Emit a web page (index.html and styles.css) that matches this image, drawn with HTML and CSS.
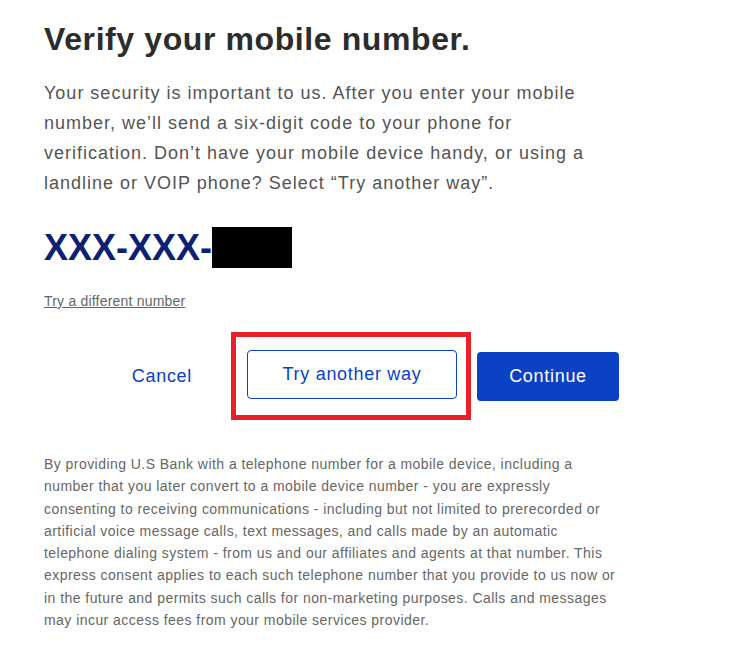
FILE: index.html
```html
<!DOCTYPE html>
<html lang="en">
<head>
    <meta charset="UTF-8">
    <meta name="viewport" content="width=device-width, initial-scale=1.0">
    <title>Verify your mobile number</title>
    <link rel="stylesheet" href="styles.css">
</head>
<body>
    <div class="container">
        <h1>Verify your mobile number.</h1>

        <p class="intro">Your security is important to us. After you enter your mobile number, we’ll send a six-digit code to your phone for verification. Don’t have your mobile device handy, or using a landline or VOIP phone? Select “Try another way”.</p>

        <div class="phone">
            <span class="phone-digits">XXX-XXX-</span><span class="redacted"></span>
        </div>

        <a href="#" class="change-link">Try a different number</a>

        <div class="actions">
            <button class="btn btn-text">Cancel</button>
            <div class="highlight-box">
                <button class="btn btn-outline">Try another way</button>
            </div>
            <button class="btn btn-primary">Continue</button>
        </div>

        <p class="disclaimer">By providing U.S Bank with a telephone number for a mobile device, including a number that you later convert to a mobile device number - you are expressly consenting to receiving communications - including but not limited to prerecorded or artificial voice message calls, text messages, and calls made by an automatic telephone dialing system - from us and our affiliates and agents at that number. This express consent applies to each such telephone number that you provide to us now or in the future and permits such calls for non-marketing purposes. Calls and messages may incur access fees from your mobile services provider.</p>
    </div>
</body>
</html>
```

FILE: styles.css
```css
body {
    margin: 0;
    background: #fff;
    font-family: 'Liberation Sans', Arial, sans-serif;
    color: #555;
}
.container {
    width: 575px;
    padding: 15px 0 0 44px;
    display: flex;
    flex-direction: column;
}
h1 {
    margin: 0;
    font-size: 32px;
    line-height: 48px;
    font-weight: bold;
    letter-spacing: 0.6px;
    color: #2c2c2c;
}
.intro {
    max-width: 548px;
    margin: 15px 0 0;
    font-size: 18px;
    line-height: 30px;
    letter-spacing: 1px;
    color: #545454;
}
.phone {
    margin-top: 29px;
    display: flex;
    align-items: center;
    height: 41px;
}
.phone-digits {
    font-size: 36px;
    font-weight: bold;
    color: #0c2074;
}
.redacted {
    display: inline-block;
    width: 80px;
    height: 41px;
    background: #000;
}
.change-link {
    margin-top: 25px;
    align-self: flex-start;
    font-size: 14px;
    letter-spacing: 0.2px;
    color: #666;
    text-decoration: underline;
}
.actions {
    margin-top: 23px;
    display: flex;
    justify-content: flex-end;
    align-items: center;
}
.btn {
    font-family: inherit;
    font-size: 18px;
    letter-spacing: 0.7px;
    border-radius: 4px;
    height: 49px;
    cursor: pointer;
}
.btn-text {
    background: none;
    border: none;
    color: #0a41c5;
    padding: 0;
    margin-right: 39px;
}
.highlight-box {
    border: 5px solid #e8202a;
    padding: 13px 9px 16px 11px;
    margin-right: 6px;
}
.btn-outline {
    display: block;
    width: 210px;
    background: #fff;
    border: 1px solid #0a41c5;
    color: #0a41c5;
}
.btn-primary {
    width: 142px;
    background: #0a41c5;
    border: none;
    color: #fff;
}
.disclaimer {
    margin: 33px 0 0;
    font-size: 14px;
    line-height: 22.3px;
    letter-spacing: 0.45px;
    color: #666;
}
```
